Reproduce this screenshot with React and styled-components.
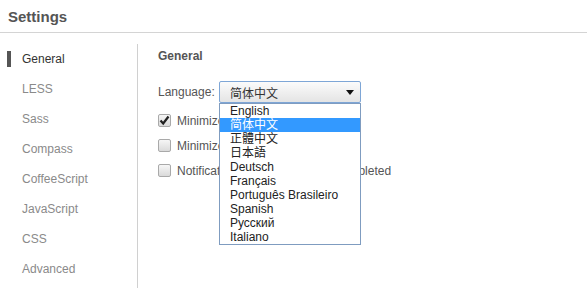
import React from "react";
import styled, { createGlobalStyle } from "styled-components";

const GlobalStyle = createGlobalStyle`
  html, body {
    margin: 0;
    padding: 0;
    background: #ffffff;
  }
  body {
    font-family: "Liberation Sans", Arial, "Noto Sans CJK SC", sans-serif;
    font-size: 12px;
    color: #555;
  }
`;

const Window = styled.div`
  width: 587px;
  height: 288px;
  overflow: hidden;
  display: flex;
  flex-direction: column;
`;

const Header = styled.div`
  height: 33px;
  box-sizing: border-box;
  border-bottom: 1px solid #d4d4d4;
  padding-left: 8px;
  display: flex;
  align-items: center;
`;

const Title = styled.h1`
  margin: 0;
  font-size: 15px;
  font-weight: bold;
  color: #555;
`;

const Body = styled.div`
  flex: 1;
  display: flex;
  padding-top: 11px;
`;

const Sidebar = styled.ul`
  width: 137px;
  margin: 0;
  padding: 0;
  list-style: none;
  border-right: 1px solid #d0d0d0;
`;

const NavItem = styled.li`
  height: 30px;
  display: flex;
  align-items: center;
  color: ${(p) => (p.$active ? "#333" : "#8a8a8a")};
`;

const Marker = styled.span`
  width: 4px;
  height: 16px;
  margin-left: 7px;
  margin-right: 11px;
  background: ${(p) => (p.$active ? "#555" : "transparent")};
`;

const Main = styled.div`
  flex: 1;
  padding: 5px 0 0 20px;
`;

const Heading = styled.h2`
  margin: 0;
  font-size: 12px;
  line-height: 14px;
  font-weight: bold;
  color: #555;
`;

const Row = styled.div`
  display: flex;
  align-items: center;
  margin-top: 18px;
`;

const Label = styled.span`
  width: 61px;
  color: #555;
`;

const SelectWrap = styled.div`
  position: relative;
`;

const SelectBox = styled.div`
  width: 142px;
  height: 22px;
  box-sizing: border-box;
  border: 1px solid #7ea6d6;
  border-radius: 2px;
  background: linear-gradient(#fbfbfb, #e4e4e4);
  display: flex;
  align-items: center;
  justify-content: space-between;
  padding: 0 6px 0 10px;
  color: #333;
  font-family: "Noto Sans CJK SC", sans-serif;
  font-size: 12px;
`;

const Arrow = styled.span`
  width: 0;
  height: 0;
  border-left: 4.5px solid transparent;
  border-right: 4.5px solid transparent;
  border-top: 5px solid #111;
`;

const Options = styled.ul`
  position: absolute;
  top: 100%;
  left: 0;
  z-index: 2;
  width: 142px;
  box-sizing: border-box;
  margin: 0;
  padding: 0;
  list-style: none;
  background: #fff;
  border: 1px solid #7f9cc0;
`;

const Option = styled.li`
  height: 14px;
  line-height: 14px;
  padding-left: 10px;
  font-size: 12px;
  font-family: "Liberation Sans", Arial, "Noto Sans CJK SC", sans-serif;
  color: ${(p) => (p.$selected ? "#fff" : "#222")};
  background: ${(p) => (p.$selected ? "#3399ff" : "transparent")};
  white-space: nowrap;
`;

const Checks = styled.div`
  margin-top: 5px;
`;

const CheckRow = styled.label`
  height: 25px;
  display: flex;
  align-items: center;
  color: #555;
`;

const Box = styled.span`
  width: 13px;
  height: 13px;
  box-sizing: border-box;
  border: 1px solid #a9a9a9;
  border-radius: 2px;
  background: linear-gradient(#f6f6f6, #dadada);
  margin-right: 6px;
  display: flex;
  align-items: center;
  justify-content: center;
`;

const languages = [
  "English",
  "简体中文",
  "正體中文",
  "日本語",
  "Deutsch",
  "Français",
  "Português Brasileiro",
  "Spanish",
  "Русский",
  "Italiano",
];

const navItems = [
  "General",
  "LESS",
  "Sass",
  "Compass",
  "CoffeeScript",
  "JavaScript",
  "CSS",
  "Advanced",
];

const options = [
  { text: "Minimize to tray on startup", checked: true },
  { text: "Minimize to tray when closed", checked: false },
  { text: "Notification when compilation completed", checked: false },
];

const Checkbox = ({ checked, children }) => (
  <CheckRow>
    <Box>
      {checked && (
        <svg width="11" height="11" viewBox="0 0 11 11">
          <path
            d="M1.5 5.5 L4.2 8.5 L9.5 1.5"
            fill="none"
            stroke="#222"
            strokeWidth="2.2"
          />
        </svg>
      )}
    </Box>
    {children}
  </CheckRow>
);

export default function App() {
  return (
    <Window>
      <GlobalStyle />
      <Header>
        <Title>Settings</Title>
      </Header>
      <Body>
        <Sidebar>
          {navItems.map((item, i) => (
            <NavItem key={item} $active={i === 0}>
              <Marker $active={i === 0} />
              {item}
            </NavItem>
          ))}
        </Sidebar>
        <Main>
          <Heading>General</Heading>
          <Row>
            <Label>Language:</Label>
            <SelectWrap>
              <SelectBox>
                简体中文
                <Arrow />
              </SelectBox>
              <Options>
                {languages.map((lang, i) => (
                  <Option key={lang} $selected={i === 1}>
                    {lang}
                  </Option>
                ))}
              </Options>
            </SelectWrap>
          </Row>
          <Checks>
            {options.map((o) => (
              <Checkbox key={o.text} checked={o.checked}>
                {o.text}
              </Checkbox>
            ))}
          </Checks>
        </Main>
      </Body>
    </Window>
  );
}
